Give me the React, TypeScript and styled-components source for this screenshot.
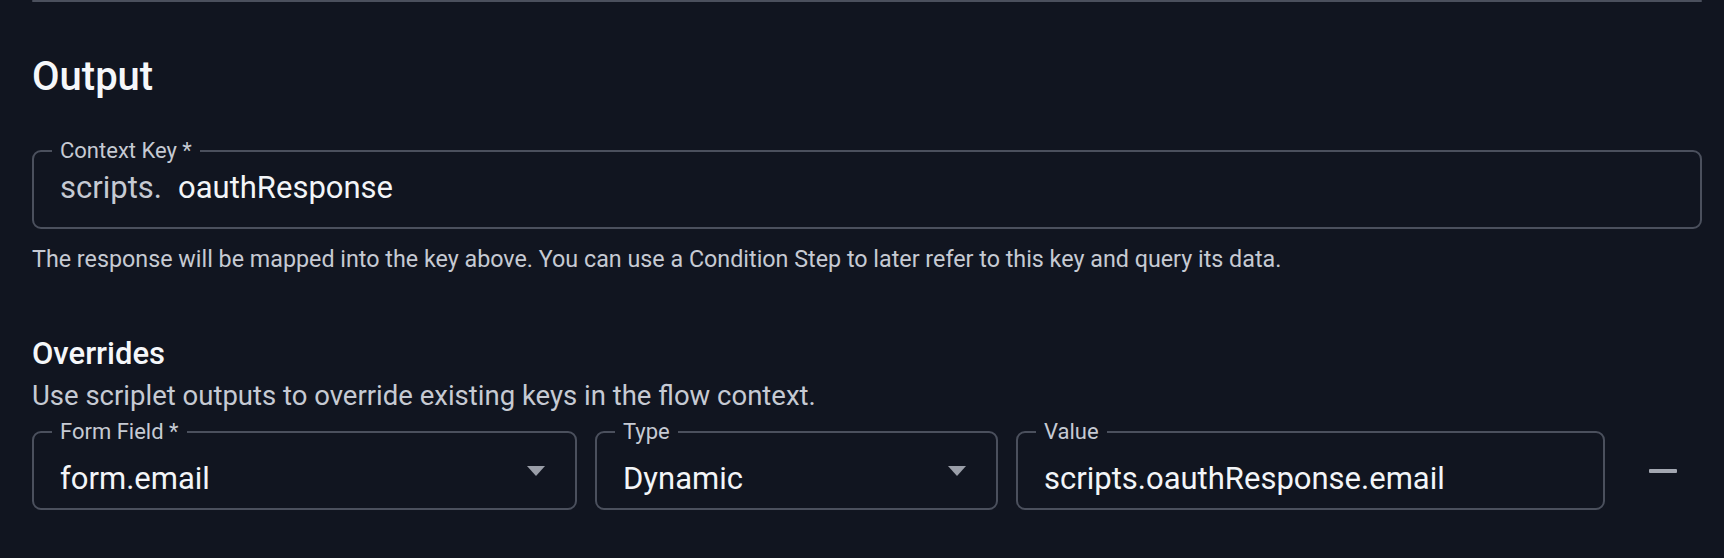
import React from 'react';
import styled, { createGlobalStyle } from 'styled-components';

const GlobalStyle = createGlobalStyle`
  html, body {
    margin: 0;
    padding: 0;
    background: #111520;
  }
  body {
    font-family: Roboto, "Liberation Sans", sans-serif;
    color: #f3f5f8;
  }
`;

const Page = styled.div`
  padding: 0 22px 0 32px;
  min-height: 558px;
  box-sizing: border-box;
`;

const Divider = styled.div`
  height: 2px;
  background: #4b505d;
  border-radius: 1px;
`;

const Heading = styled.h2`
  margin: 55px 0 0;
  font-size: 40px;
  line-height: 40px;
  font-weight: 500;
  color: #f5f7fa;
`;

const SubHeading = styled.h3`
  margin: 61px 0 0;
  font-size: 31px;
  line-height: 34px;
  font-weight: 500;
  color: #f5f7fa;
`;

const Field = styled.fieldset`
  margin: 0;
  padding: 7px 26px 0 26px;
  min-inline-size: 0;
  border: 2px solid #4b505d;
  border-radius: 9px;
  display: flex;
  align-items: center;
  height: 89px;
  box-sizing: border-box;
`;

const Legend = styled.legend`
  margin-left: -8px;
  padding: 0 8px;
  font-size: 22px;
  line-height: 21px;
  color: #c6cad3;
`;

const Value = styled.div`
  flex: 1;
  font-size: 31px;
  line-height: 40px;
  color: #f3f5f8;
  white-space: nowrap;
  overflow: hidden;
`;

const Prefix = styled.span`
  color: #c6cad3;
  margin-right: 16px;
`;

const Caret = styled.svg`
  flex: none;
  width: 18px;
  height: 10px;
  margin: 0 4px 15px 0;
`;

const Helper = styled.p<{ $size: number; $offset?: number }>`
  margin: ${p => p.$offset ?? 0}px 0 0;
  font-size: ${p => p.$size}px;
  line-height: 1.4;
  color: #c6cad3;
`;

const KeyBlock = styled.div`
  margin-top: 43px;
  display: flex;
  flex-direction: column;
  gap: 14px;
`;

const Row = styled.div`
  margin-top: 6px;
  display: grid;
  grid-template-columns: 545fr 403fr 589fr 79px;
  gap: 18px;
  align-items: end;
`;

const RemoveButton = styled.button`
  height: 78px;
  border: 0;
  background: transparent;
  display: flex;
  align-items: center;
  justify-content: center;
  cursor: pointer;
  padding: 0;
`;

const MinusBar = styled.span`
  width: 28px;
  height: 4px;
  background: #a3a7b1;
  border-radius: 1px;
`;

const DropCaret = () => (
  <Caret viewBox="0 0 18 10">
    <path d="M0 0 H18 L9 10 Z" fill="#9a9ea8" />
  </Caret>
);

export default function App() {
  return (
    <>
      <GlobalStyle />
      <Page>
        <Divider />
        <Heading>Output</Heading>
        <KeyBlock>
          <Field>
            <Legend>Context Key *</Legend>
            <Value>
              <Prefix>scripts.</Prefix>oauthResponse
            </Value>
          </Field>
          <Helper $size={23.3}>
            The response will be mapped into the key above. You can use a Condition Step to later refer to this key and query its data.
          </Helper>
        </KeyBlock>
        <SubHeading>Overrides</SubHeading>
        <Helper $size={27.5} $offset={6}>
          Use scriplet outputs to override existing keys in the flow context.
        </Helper>
        <Row>
          <Field>
            <Legend>Form Field *</Legend>
            <Value>form.email</Value>
            <DropCaret />
          </Field>
          <Field>
            <Legend>Type</Legend>
            <Value>Dynamic</Value>
            <DropCaret />
          </Field>
          <Field>
            <Legend>Value</Legend>
            <Value>scripts.oauthResponse.email</Value>
          </Field>
          <RemoveButton aria-label="Remove override">
            <MinusBar />
          </RemoveButton>
        </Row>
      </Page>
    </>
  );
}
